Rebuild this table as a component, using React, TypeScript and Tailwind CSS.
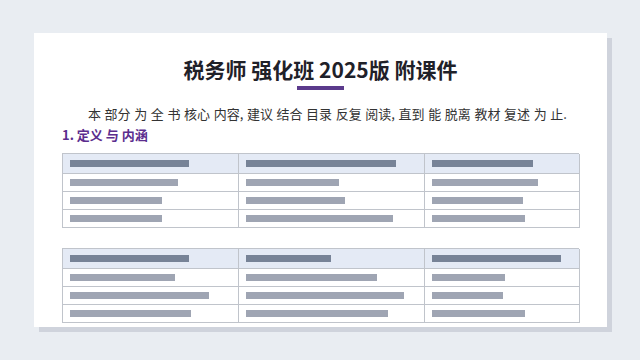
const table1 = {
  head: [119, 150, 101],
  rows: [
    [108, 93, 106],
    [92, 99, 91],
    [92, 147, 93],
  ],
};

const table2 = {
  head: [119, 85, 129],
  rows: [
    [105, 131, 73],
    [139, 158, 71],
    [121, 142, 93],
  ],
};

function Bar({ w, dark }: { w: number; dark?: boolean }) {
  return (
    <div
      className={dark ? "h-[7px] bg-[#778397]" : "h-[7px] bg-[#9fa5b3]"}
      style={{ width: w }}
    />
  );
}

function SkeletonTable({ data }: { data: { head: number[]; rows: number[][] } }) {
  return (
    <div className="grid grid-cols-[176px_186px_155px] border-l border-t border-[#c0c4cb]">
      {data.head.map((w, i) => (
        <div key={`h${i}`} className="h-[20px] flex items-center pl-[7px] bg-[#e4eaf5] border-r border-b border-[#c0c4cb]">
          <Bar w={w} dark />
        </div>
      ))}
      {data.rows.map((row, r) =>
        row.map((w, i) => (
          <div key={`${r}-${i}`} className="h-[18px] flex items-center pl-[7px] bg-white border-r border-b border-[#c0c4cb]">
            <Bar w={w} />
          </div>
        ))
      )}
    </div>
  );
}

export default function App() {
  return (
    <div className="w-[640px] h-[360px] bg-[#e9edf2] pt-[33px] pl-[34px] font-['Noto_Sans_CJK_SC',sans-serif]">
      <div className="w-[573px] h-[294px] bg-white shadow-[5px_5px_0_#cfd3dc] px-[28px] pt-[26px]">
        <h1 className="text-center text-[21px] leading-[20px] font-bold text-[#1f2129]">
          税务师 强化班 2025版 附课件
        </h1>
        <div className="mt-[7px] mx-auto w-[47px] h-[4px] bg-[#5b3a8c]" />
        <p className="mt-[14px] text-[13px] leading-[20px] text-[#333] indent-[26px] whitespace-nowrap [word-spacing:0.7px]">
          本 部分 为 全 书 核心 内容, 建议 结合 目录 反复 阅读, 直到 能 脱离 教材 复述 为 止.
        </p>
        <h2 className="mt-[1px] text-[13px] leading-[20px] font-bold text-[#5b2d8e]">1. 定义 与 内涵</h2>
        <div className="mt-[8px] flex flex-col gap-[20px]">
          <SkeletonTable data={table1} />
          <SkeletonTable data={table2} />
        </div>
      </div>
    </div>
  );
}
